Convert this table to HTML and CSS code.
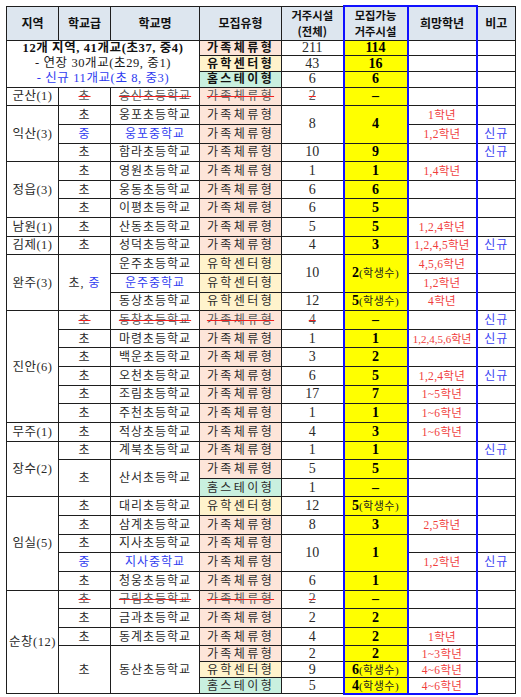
FILE: index.html
```html
<!DOCTYPE html>
<html lang="ko">
<head>
<meta charset="utf-8">
<link rel="stylesheet" href="styles.css">
</head>
<body>
<table class="t">
<colgroup>
<col class="c1"><col class="c2"><col class="c3"><col class="c4"><col class="c5"><col class="c6"><col class="c7"><col class="c8">
</colgroup>
<tr class="h">
<th>지역</th><th>학교급</th><th>학교명</th><th>모집유형</th><th><div class="ln">거주시설</div><div class="ln">(전체)</div></th><th class="hl-h"><div class="ln">모집가능</div><div class="ln">거주시설</div></th><th class="w-h">희망학년</th><th>비고</th>
</tr>
<tr class="s">
<td colspan="3" rowspan="3" class="sum"><div class="b">12개 지역, 41개교(초37, 중4)</div><div>- 연장 30개교(초29, 중1)</div><div class="blue">- 신규 11개교(초 8, 중3)</div></td>
<td class="tp p b">가족체류형</td><td class="n">211</td><td class="hl">114</td><td class="w"></td><td></td>
</tr>
<tr class="s"><td class="tp y b">유학센터형</td><td class="n">43</td><td class="hl">16</td><td class="w"></td><td></td></tr>
<tr class="s"><td class="tp g b">홈스테이형</td><td class="n">6</td><td class="hl">6</td><td class="w"></td><td></td></tr>

<tr class="r"><td class="rg">군산(1)</td><td class="k del">초</td><td class="nm del">숭신초등학교</td><td class="tp p del">가족체류형</td><td class="n del">2</td><td class="hl">–</td><td class="w"></td><td></td></tr>

<tr class="r"><td rowspan="3" class="rg">익산(3)</td><td class="k">초</td><td class="nm">웅포초등학교</td><td class="tp p">가족체류형</td><td rowspan="2" class="n">8</td><td rowspan="2" class="hl">4</td><td class="w">1학년</td><td></td></tr>
<tr class="r"><td class="k blue">중</td><td class="nm blue">웅포중학교</td><td class="tp p">가족체류형</td><td class="w">1,2학년</td><td class="nt">신규</td></tr>
<tr class="r"><td class="k">초</td><td class="nm">함라초등학교</td><td class="tp p">가족체류형</td><td class="n">10</td><td class="hl">9</td><td class="w"></td><td class="nt">신규</td></tr>

<tr class="r"><td rowspan="3" class="rg">정읍(3)</td><td class="k">초</td><td class="nm">영원초등학교</td><td class="tp p">가족체류형</td><td class="n">1</td><td class="hl">1</td><td class="w">1,4학년</td><td></td></tr>
<tr class="r"><td class="k">초</td><td class="nm">웅동초등학교</td><td class="tp p">가족체류형</td><td class="n">6</td><td class="hl">6</td><td class="w"></td><td></td></tr>
<tr class="r"><td class="k">초</td><td class="nm">이평초등학교</td><td class="tp p">가족체류형</td><td class="n">6</td><td class="hl">5</td><td class="w"></td><td></td></tr>

<tr class="r"><td class="rg">남원(1)</td><td class="k">초</td><td class="nm">산동초등학교</td><td class="tp p">가족체류형</td><td class="n">5</td><td class="hl">5</td><td class="w">1,2,4학년</td><td></td></tr>

<tr class="r"><td class="rg">김제(1)</td><td class="k">초</td><td class="nm">성덕초등학교</td><td class="tp p">가족체류형</td><td class="n">4</td><td class="hl">3</td><td class="w">1,2,4,5학년</td><td class="nt">신규</td></tr>

<tr class="r"><td rowspan="3" class="rg">완주(3)</td><td rowspan="3" class="k">초, <span class="blue">중</span></td><td class="nm">운주초등학교</td><td class="tp y">유학센터형</td><td rowspan="2" class="n">10</td><td rowspan="2" class="hl">2<span class="st">(학생수)</span></td><td class="w">4,5,6학년</td><td></td></tr>
<tr class="r"><td class="nm blue">운주중학교</td><td class="tp y">유학센터형</td><td class="w">1,2학년</td><td></td></tr>
<tr class="r"><td class="nm">동상초등학교</td><td class="tp y">유학센터형</td><td class="n">12</td><td class="hl">5<span class="st">(학생수)</span></td><td class="w">4학년</td><td></td></tr>

<tr class="r"><td rowspan="6" class="rg">진안(6)</td><td class="k del">초</td><td class="nm del">동창초등학교</td><td class="tp p del">가족체류형</td><td class="n del">4</td><td class="hl">–</td><td class="w"></td><td class="nt">신규</td></tr>
<tr class="r"><td class="k">초</td><td class="nm">마령초등학교</td><td class="tp p">가족체류형</td><td class="n">1</td><td class="hl">1</td><td class="w sm">1,2,4,5,6학년</td><td class="nt">신규</td></tr>
<tr class="r"><td class="k">초</td><td class="nm">백운초등학교</td><td class="tp p">가족체류형</td><td class="n">3</td><td class="hl">2</td><td class="w"></td><td></td></tr>
<tr class="r"><td class="k">초</td><td class="nm">오천초등학교</td><td class="tp p">가족체류형</td><td class="n">6</td><td class="hl">5</td><td class="w">1,2,4학년</td><td class="nt">신규</td></tr>
<tr class="r"><td class="k">초</td><td class="nm">조림초등학교</td><td class="tp p">가족체류형</td><td class="n">17</td><td class="hl">7</td><td class="w">1~5학년</td><td></td></tr>
<tr class="r"><td class="k">초</td><td class="nm">주천초등학교</td><td class="tp p">가족체류형</td><td class="n">1</td><td class="hl">1</td><td class="w">1~6학년</td><td></td></tr>

<tr class="r"><td class="rg">무주(1)</td><td class="k">초</td><td class="nm">적상초등학교</td><td class="tp p">가족체류형</td><td class="n">4</td><td class="hl">3</td><td class="w">1~6학년</td><td></td></tr>

<tr class="r"><td rowspan="3" class="rg">장수(2)</td><td class="k">초</td><td class="nm">계북초등학교</td><td class="tp p">가족체류형</td><td class="n">1</td><td class="hl">1</td><td class="w"></td><td class="nt">신규</td></tr>
<tr class="r"><td rowspan="2" class="k">초</td><td rowspan="2" class="nm">산서초등학교</td><td class="tp p">가족체류형</td><td class="n">5</td><td class="hl">5</td><td class="w"></td><td></td></tr>
<tr class="r"><td class="tp g">홈스테이형</td><td class="n">1</td><td class="hl">–</td><td class="w"></td><td></td></tr>

<tr class="r"><td rowspan="5" class="rg">임실(5)</td><td class="k">초</td><td class="nm">대리초등학교</td><td class="tp y">유학센터형</td><td class="n">12</td><td class="hl">5<span class="st">(학생수)</span></td><td class="w"></td><td></td></tr>
<tr class="r"><td class="k">초</td><td class="nm">삼계초등학교</td><td class="tp p">가족체류형</td><td class="n">8</td><td class="hl">3</td><td class="w">2,5학년</td><td></td></tr>
<tr class="r"><td class="k">초</td><td class="nm">지사초등학교</td><td class="tp p">가족체류형</td><td rowspan="2" class="n">10</td><td rowspan="2" class="hl">1</td><td class="w"></td><td></td></tr>
<tr class="r"><td class="k blue">중</td><td class="nm blue">지사중학교</td><td class="tp p">가족체류형</td><td class="w">1,2학년</td><td class="nt">신규</td></tr>
<tr class="r"><td class="k">초</td><td class="nm">청웅초등학교</td><td class="tp p">가족체류형</td><td class="n">6</td><td class="hl">1</td><td class="w"></td><td></td></tr>

<tr class="r"><td rowspan="6" class="rg">순창(12)</td><td class="k del">초</td><td class="nm del">구림초등학교</td><td class="tp p del">가족체류형</td><td class="n del">2</td><td class="hl">–</td><td class="w"></td><td></td></tr>
<tr class="r"><td class="k">초</td><td class="nm">금과초등학교</td><td class="tp p">가족체류형</td><td class="n">2</td><td class="hl">2</td><td class="w"></td><td></td></tr>
<tr class="r"><td class="k">초</td><td class="nm">동계초등학교</td><td class="tp p">가족체류형</td><td class="n">4</td><td class="hl">2</td><td class="w">1학년</td><td></td></tr>
<tr class="d"><td rowspan="3" class="k">초</td><td rowspan="3" class="nm">동산초등학교</td><td class="tp p">가족체류형</td><td class="n">2</td><td class="hl">2</td><td class="w">1~3학년</td><td></td></tr>
<tr class="d"><td class="tp y">유학센터형</td><td class="n">9</td><td class="hl">6<span class="st">(학생수)</span></td><td class="w">4~6학년</td><td></td></tr>
<tr class="d"><td class="tp g">홈스테이형</td><td class="n">5</td><td class="hl">4<span class="st">(학생수)</span></td><td class="w">4~6학년</td><td></td></tr>
</table>
</body>
</html>
```
FILE: styles.css
```css
body {
  margin: 0;
  background: #fff;
  color: #1e1e1e;
  font-family: "Liberation Serif", "Noto Sans CJK KR", serif;
}
.t {
  border-collapse: collapse;
  table-layout: fixed;
  width: 509px;
  margin: 5px 0 0 6px;
}
.c1 { width: 52px; }
.c2 { width: 52px; }
.c3 { width: 89px; }
.c4 { width: 82px; }
.c5 { width: 62px; }
.c6 { width: 64px; }
.c7 { width: 69px; }
.c8 { width: 39px; }

td, th {
  border: 1px solid #1e1e1e;
  padding: 0;
  text-align: center;
  vertical-align: middle;
  white-space: nowrap;
  overflow: hidden;
}
th {
  background: #dde6ef;
  font-family: "Noto Sans CJK KR", sans-serif;
  font-weight: 700;
  font-size: 12px;
  line-height: 16px;
  color: #111;
}
.ln {
  font-size: 11.3px;
  height: 16.4px;
  line-height: 16.4px;
  overflow: hidden;
}
.h { height: 34px; }
.s { height: 15.33px; }
.r { height: 18.63px; }
.d { height: 16px; }

td {
  font-family: "Liberation Serif", "Noto Sans CJK KR", serif;
  font-size: 12px;
  line-height: 14px;
  color: #2a2a2a;
  letter-spacing: 1px;
}
.sum {
  font-size: 12.5px;
  line-height: 15.3px;
  letter-spacing: 0.6px;
  color: #1a1a1a;
}
.b { font-weight: 700; color: #111; }
.blue { color: #2f3cf0; }
.rg { font-size: 12.5px; letter-spacing: 0.5px; }
.nm { letter-spacing: 1px; }
.tp { letter-spacing: 2.4px; }
.p { background: #fde5d9; }
.y { background: #fff3cc; }
.g { background: #c9f0df; }
.n { font-size: 14px; letter-spacing: 0; }
.hl {
  background: #ffff00;
  font-size: 14px;
  font-weight: 700;
  letter-spacing: 0;
  color: #000;
  border-left: 2px solid #1010ff;
  border-right: 2px solid #1010ff;
}
.hl-h {
  border-left: 2px solid #1010ff;
  border-right: 2px solid #1010ff;
  border-top: 2px solid #1010ff;
}
.w-h {
  border-right: 2px solid #1010ff;
  border-top: 2px solid #1010ff;
}
.w {
  color: #f03c3c;
  font-size: 11.5px;
  letter-spacing: 0.3px;
  border-right: 2px solid #1010ff;
}
.sm { font-size: 11px; letter-spacing: 0; }
.st {
  font-weight: 400;
  font-size: 11px;
  letter-spacing: 0.5px;
  color: #222;
}
.nt { color: #3d45f2; font-size: 12px; letter-spacing: 1px; }
.del {
  color: #555;
  text-decoration: line-through;
  text-decoration-color: #f02020;
  text-decoration-thickness: 1px;
}
tr:last-child .hl, tr:last-child .w { border-bottom: 2px solid #1010ff; }
```
